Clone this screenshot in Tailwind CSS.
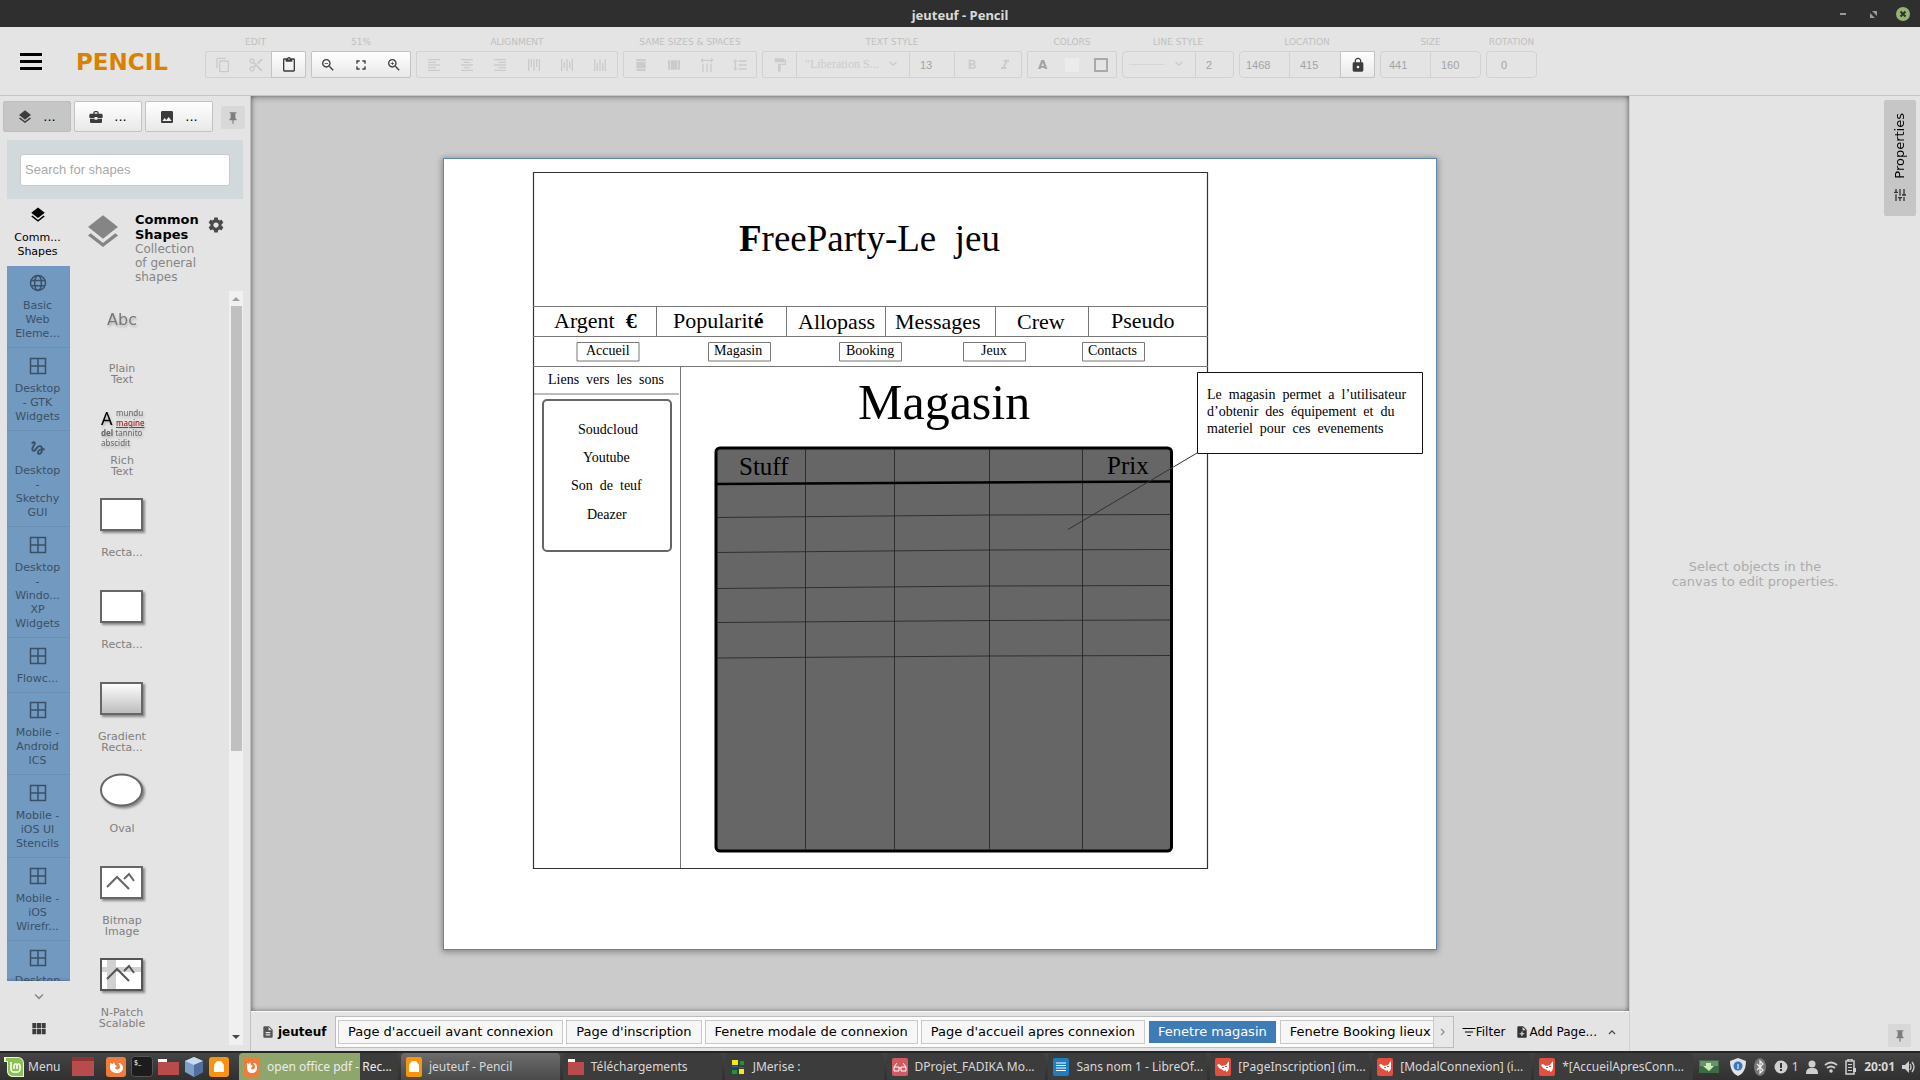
<!DOCTYPE html>
<html lang="fr">
<head>
<meta charset="utf-8">
<title>jeuteuf - Pencil</title>
<script src="https://cdn.jsdelivr.net/npm/@tailwindcss/browser@4"></script>
</head>
<body class="h-screen flex flex-col overflow-hidden bg-[#e4e4e4] font-['DejaVu_Sans',sans-serif] text-black">

<svg class="hidden" aria-hidden="true">
  <symbol id="layers" viewBox="0 0 24 24"><path d="M11.99 18.54l-7.37-5.73L3 14.07l9 7 9-7-1.63-1.27-7.38 5.74zM12 16l7.36-5.73L21 9l-9-7-9 7 1.63 1.27L12 16z"/></symbol>
  <symbol id="copy" viewBox="0 0 24 24"><path d="M16 1H4c-1.1 0-2 .9-2 2v14h2V3h12V1zm3 4H8c-1.1 0-2 .9-2 2v14c0 1.1.9 2 2 2h11c1.1 0 2-.9 2-2V7c0-1.1-.9-2-2-2zm0 16H8V7h11v14z"/></symbol>
  <symbol id="cut" viewBox="0 0 24 24"><path d="M9.64 7.64c.23-.5.36-1.05.36-1.64 0-2.21-1.79-4-4-4S2 3.79 2 6s1.79 4 4 4c.59 0 1.14-.13 1.64-.36L10 12l-2.36 2.36C7.14 14.13 6.59 14 6 14c-2.21 0-4 1.79-4 4s1.79 4 4 4 4-1.79 4-4c0-.59-.13-1.14-.36-1.64L12 14l7 7h3v-1L9.64 7.64zM6 8c-1.1 0-2-.89-2-2s.9-2 2-2 2 .89 2 2-.9 2-2 2zm0 12c-1.1 0-2-.89-2-2s.9-2 2-2 2 .89 2 2-.9 2-2 2zm6-7.5c-.28 0-.5-.22-.5-.5s.22-.5.5-.5.5.22.5.5-.22.5-.5.5zM19 3l-6 6 2 2 7-7V3z"/></symbol>
  <symbol id="paste" viewBox="0 0 24 24"><path d="M19 2h-4.18C14.4.84 13.3 0 12 0c-1.3 0-2.4.84-2.82 2H5c-1.1 0-2 .9-2 2v16c0 1.1.9 2 2 2h14c1.1 0 2-.9 2-2V4c0-1.1-.9-2-2-2zm-7 0c.55 0 1 .45 1 1s-.45 1-1 1-1-.45-1-1 .45-1 1-1zm7 18H5V4h2v3h10V4h2v16z"/></symbol>
  <symbol id="zout" viewBox="0 0 24 24"><path d="M15.5 14h-.79l-.28-.27C15.41 12.59 16 11.11 16 9.5 16 5.91 13.09 3 9.5 3S3 5.91 3 9.5 5.91 16 9.5 16c1.61 0 3.09-.59 4.23-1.57l.27.28v.79l5 4.99L20.49 19l-4.99-5zm-6 0C7.01 14 5 11.99 5 9.5S7.01 5 9.5 5 14 7.01 14 9.5 11.99 14 9.5 14zM7 9h5v1H7z"/></symbol>
  <symbol id="zin" viewBox="0 0 24 24"><path d="M15.5 14h-.79l-.28-.27C15.41 12.59 16 11.11 16 9.5 16 5.91 13.09 3 9.5 3S3 5.91 3 9.5 5.91 16 9.5 16c1.61 0 3.09-.59 4.23-1.57l.27.28v.79l5 4.99L20.49 19l-4.99-5zm-6 0C7.01 14 5 11.99 5 9.5S7.01 5 9.5 5 14 7.01 14 9.5 11.99 14 9.5 14zm2.5-4h-2v2H9v-2H7V9h2V7h1v2h2v1z"/></symbol>
  <symbol id="full" viewBox="0 0 24 24"><path d="M7 14H5v5h5v-2H7v-3zm-2-4h2V7h3V5H5v5zm12 7h-3v2h5v-5h-2v3zM14 5v2h3v3h2V5h-5z"/></symbol>
  <symbol id="al" viewBox="0 0 24 24"><path d="M15 15H3v2h12v-2zm0-8H3v2h12V7zM3 13h18v-2H3v2zm0 8h18v-2H3v2zM3 3v2h18V3H3z"/></symbol>
  <symbol id="ac" viewBox="0 0 24 24"><path d="M7 15v2h10v-2H7zm-4 6h18v-2H3v2zm0-8h18v-2H3v2zm4-6v2h10V7H7zM3 3v2h18V3H3z"/></symbol>
  <symbol id="ar" viewBox="0 0 24 24"><path d="M3 21h18v-2H3v2zm6-4h12v-2H9v2zm-6-4h18v-2H3v2zm6-4h12V7H9v2zM3 3v2h18V3H3z"/></symbol>
  <symbol id="sw" viewBox="0 0 24 24"><path d="M5 3h14v3H5zM7 7h12v10H5V7zM5 18h14v3H5z"/></symbol>
  <symbol id="sh" viewBox="0 0 24 24"><path d="M3 5h3v14H3zM7 5h10v14H7zM18 5h3v14h-3z"/></symbol>
  <symbol id="sv" viewBox="0 0 24 24"><path d="M5 10h2v12H5zM11 10h2v12h-2zM17 10h2v12h-2zM6 4h12V1l4 4-4 4V6H6v3L2 5l4-4z"/></symbol>
  <symbol id="ls" viewBox="0 0 24 24"><path d="M6 7h2.5L5 3.5 1.5 7H4v10H1.5L5 20.5 8.5 17H6V7zm4-2v2h12V5H10zm0 14h12v-2H10v2zm0-6h12v-2H10v2z"/></symbol>
  <symbol id="paint" viewBox="0 0 24 24"><path d="M18 4V3c0-.55-.45-1-1-1H5c-.55 0-1 .45-1 1v4c0 .55.45 1 1 1h12c.55 0 1-.45 1-1V6h1v4H9v11c0 .55.45 1 1 1h2c.55 0 1-.45 1-1v-9h8V4h-3z"/></symbol>
  <symbol id="bold" viewBox="0 0 24 24"><path d="M15.6 10.79c.97-.67 1.65-1.77 1.65-2.79 0-2.26-1.75-4-4-4H7v14h7.04c2.09 0 3.71-1.7 3.71-3.79 0-1.52-.86-2.82-2.15-3.42zM10 6.5h3c.83 0 1.5.67 1.5 1.5s-.67 1.5-1.5 1.5h-3v-3zm3.5 9H10v-3h3.5c.83 0 1.5.67 1.5 1.5s-.67 1.5-1.5 1.5z"/></symbol>
  <symbol id="ital" viewBox="0 0 24 24"><path d="M10 4v3h2.21l-3.42 8H6v3h8v-3h-2.21l3.42-8H18V4z"/></symbol>
  <symbol id="lock" viewBox="0 0 24 24"><path d="M18 8h-1V6c0-2.76-2.24-5-5-5S7 3.24 7 6v2H6c-1.1 0-2 .9-2 2v10c0 1.1.9 2 2 2h12c1.1 0 2-.9 2-2V10c0-1.1-.9-2-2-2zm-6 9c-1.1 0-2-.9-2-2s.9-2 2-2 2 .9 2 2-.9 2-2 2zm3.1-9H8.9V6c0-1.71 1.39-3.1 3.1-3.1 1.71 0 3.1 1.39 3.1 3.1v2z"/></symbol>
  <symbol id="down" viewBox="0 0 24 24"><path d="M7.41 7.84L12 12.42l4.59-4.58L18 9.25l-6 6-6-6z"/></symbol>
  <symbol id="case" viewBox="0 0 24 24"><path d="M10 16v-1H3.01L3 19c0 1.11.89 2 2 2h14c1.11 0 2-.89 2-2v-4h-7v1h-4zm10-9h-4.01V5l-2-2h-4l-2 2v2H4c-1.1 0-2 .9-2 2v3c0 1.11.89 2 2 2h6v-2h4v2h6c1.1 0 2-.9 2-2V9c0-1.1-.9-2-2-2zm-6 0h-4V5h4v2z"/></symbol>
  <symbol id="image" viewBox="0 0 24 24"><path d="M21 19V5c0-1.1-.9-2-2-2H5c-1.1 0-2 .9-2 2v14c0 1.1.9 2 2 2h14c1.1 0 2-.9 2-2zM8.5 13.5l2.5 3.01L14.5 12l4.5 6H5l3.5-4.5z"/></symbol>
  <symbol id="pin" viewBox="0 0 24 24"><path d="M6 2h12v2h-2v8l2 2v2h-5v6h-2v-6H6v-2l2-2V4H6z"/></symbol>
  <symbol id="gear" viewBox="0 0 24 24"><path d="M19.43 12.98c.04-.32.07-.64.07-.98s-.03-.66-.07-.98l2.11-1.65c.19-.15.24-.42.12-.64l-2-3.46c-.12-.22-.39-.3-.61-.22l-2.49 1c-.52-.4-1.08-.73-1.69-.98l-.38-2.65C14.46 2.18 14.25 2 14 2h-4c-.25 0-.46.18-.49.42l-.38 2.65c-.61.25-1.17.59-1.69.98l-2.49-1c-.23-.09-.49 0-.61.22l-2 3.46c-.13.22-.07.49.12.64l2.11 1.65c-.04.32-.07.65-.07.98s.03.66.07.98l-2.11 1.65c-.19.15-.24.42-.12.64l2 3.46c.12.22.39.3.61.22l2.49-1c.52.4 1.08.73 1.69.98l.38 2.65c.03.24.24.42.49.42h4c.25 0 .46-.18.49-.42l.38-2.65c.61-.25 1.17-.59 1.69-.98l2.49 1c.23.09.49 0 .61-.22l2-3.46c.12-.22.07-.49-.12-.64l-2.11-1.65zM12 15.5c-1.93 0-3.5-1.57-3.5-3.5s1.57-3.5 3.5-3.5 3.5 1.57 3.5 3.5-1.57 3.5-3.5 3.5z"/></symbol>
  <symbol id="globe" viewBox="0 0 24 24"><g fill="none" stroke="currentColor" stroke-width="2"><circle cx="12" cy="12" r="10"/><ellipse cx="12" cy="12" rx="4.5" ry="10"/><path d="M3 8.5h18M3 15.5h18"/></g></symbol>
  <symbol id="grid4" viewBox="0 0 24 24"><path fill="none" stroke="currentColor" stroke-width="2" d="M2 2h20v20H2zM12 2v20M2 12h20"/></symbol>
  <symbol id="gest" viewBox="0 0 24 24"><path d="M4.59 6.89c.7-.71 1.4-1.35 1.71-1.22.5.2 0 1.03-.3 1.52-.25.42-2.86 3.89-2.86 6.31 0 1.28.48 2.34 1.34 2.98.75.56 1.74.73 2.64.46 1.07-.31 1.95-1.4 3.06-2.77 1.21-1.49 2.83-3.44 4.08-3.44 1.63 0 1.65 1.01 1.76 1.79-3.78.64-5.38 3.67-5.38 5.37 0 1.7 1.44 3.09 3.21 3.09 1.63 0 4.29-1.33 4.69-6.1H21v-2.5h-2.47c-.15-1.65-1.09-4.2-4.03-4.2-2.25 0-4.18 1.91-4.94 2.84-.58.73-2.06 2.48-2.29 2.72-.25.3-.68.84-1.11.84-.45 0-.72-.83-.36-1.92.35-1.09 1.4-2.86 1.85-3.52.78-1.14 1.3-1.92 1.3-3.28C8.95 3.69 7.31 3 6.44 3 5.12 3 3.97 4 3.72 4.25c-.36.36-.66.66-.88.93l1.75 1.71zm9.29 11.66c-.31 0-.74-.26-.74-.72 0-.6.73-2.2 2.87-2.76-.3 2.69-1.43 3.48-2.13 3.48z"/></symbol>
  <symbol id="mod" viewBox="0 0 24 24"><path d="M2 3h6v8H2zM9 3h6v8H9zM16 3h6v8h-6zM2 12h6v8H2zM9 12h6v8H9zM16 12h6v8h-6z"/></symbol>
  <symbol id="tune" viewBox="0 0 24 24"><path d="M3 17v2h6v-2H3zM3 5v2h10V5H3zm10 16v-2h8v-2h-8v-2h-2v6h2zM7 9v2H3v2h4v2h2V9H7zm14 4v-2H11v2h10zm-6-4h2V7h4V5h-4V3h-2v6z"/></symbol>
  <symbol id="doc" viewBox="0 0 24 24"><path d="M14 2H6c-1.1 0-2 .9-2 2v16c0 1.1.9 2 2 2h12c1.1 0 2-.9 2-2V8l-6-6zm2 16H8v-2h8v2zm0-4H8v-2h8v2zm-3-5V3.5L18.5 9H13z"/></symbol>
  <symbol id="addp" viewBox="0 0 24 24"><path d="M14 2H6c-1.1 0-2 .9-2 2v16c0 1.1.9 2 2 2h12c1.1 0 2-.9 2-2V8l-6-6zm2 14h-3v3h-2v-3H8v-2h3v-3h2v3h3v2zm-3-7V3.5L18.5 9H13z"/></symbol>
  <symbol id="filt" viewBox="0 0 24 24"><path d="M9 19h6v-2H9zM1 5v2h22V5zm4 8h14v-2H5z"/></symbol>
  <symbol id="ffx" viewBox="0 0 16 20"><rect width="16" height="20" rx="2" fill="#ee7c3a"/><path d="M3 6l2 1 1-2 1 3 2 1-2 2c0 2 4 2 4-1 0-2-1-3-2-4 3 0 4 2 4 5s-2 5-5 5-5-2-5-5z" fill="#fff"/></symbol>
  <symbol id="home" viewBox="0 0 16 20"><rect width="16" height="20" rx="2" fill="#f9940f"/><path d="M3 15V8l3-4h4l3 4v7z" fill="#fff"/></symbol>
  <symbol id="fold" viewBox="0 0 16 18"><path d="M0 1h7v3H0z" fill="#fff"/><path d="M0 4h16v12a1 1 0 0 1-1 1H1a1 1 0 0 1-1-1z" fill="#b84b4b"/></symbol>
  <symbol id="gimp" viewBox="0 0 16 20"><rect y="1" width="16" height="18" rx="2" fill="#e2503d"/><path d="M2 8l2-1 3 2 4-1 3-4v7l-1 3-2 1v-2l-2 1-1-1-4-2z" fill="#fff"/><path d="M7 10h2v1H7zM10 9h2v1h-2z" fill="#e2503d"/></symbol>
</svg>

<!-- title bar -->
<header class="h-[27px] shrink-0 bg-[#2f2f2f] grid grid-cols-[1fr_auto_1fr] items-center text-[#dadada] font-['Noto_Sans',sans-serif]">
  <span></span>
  <h1 class="text-[13px] font-bold leading-[18px] pt-0.5">jeuteuf - Pencil</h1>
  <div class="flex justify-end items-center gap-4 pr-2.5">
    <button aria-label="Réduire" class="w-3.5 h-3.5"><svg viewBox="0 0 14 14"><path d="M4 6h6v2H4z" fill="#9a9a9a"/></svg></button>
    <button aria-label="Restaurer" class="w-3.5 h-3.5"><svg viewBox="0 0 14 14"><path d="M6 4h5v5zM4 6v5h5z" fill="#9a9a9a"/></svg></button>
    <button aria-label="Fermer" class="w-3.5 h-3.5"><svg viewBox="0 0 14 14"><circle cx="7" cy="7" r="7" fill="#92b372"/><path d="M4.5 4.5l5 5m0-5l-5 5" stroke="#2f2f2f" stroke-width="2"/></svg></button>
  </div>
</header>

<!-- toolbar -->
<div class="h-[69px] shrink-0 border-b border-[#c6c6c6] flex items-start pl-5 fill-[#cbcbcb] text-[#c0c0c0]">
  <button aria-label="Menu" class="mt-[25px] flex flex-col gap-1 w-[22px] py-px"><span class="h-[3px] bg-black"></span><span class="h-[3px] bg-black"></span><span class="h-[3px] bg-black"></span></button>
  <div class="ml-[34px] mt-[21px] w-[129px] text-[23px] leading-[28px] font-bold text-[#d98200]">PENCIL</div>
  <div class="flex gap-[5px] pt-[9px] text-[9px] leading-[12px]">
    <div class="flex flex-col items-center gap-[3px]"><span>EDIT</span>
      <div class="flex h-[27px] w-[101px] border border-[#d2d2d2] rounded-[2px]">
        <button disabled aria-label="Copier" class="flex-1 grid place-items-center"><svg class="size-4"><use href="#copy"/></svg></button>
        <button disabled aria-label="Couper" class="flex-1 grid place-items-center"><svg class="size-4"><use href="#cut"/></svg></button>
        <button aria-label="Coller" class="flex-1 grid place-items-center -m-px border border-[#c3c3c3] rounded-r-[2px] bg-linear-to-b from-white to-[#e8e8e8] fill-[#3c3c3c]"><svg class="size-4"><use href="#paste"/></svg></button>
      </div></div>
    <div class="flex flex-col items-center gap-[3px]"><span>51%</span>
      <div class="flex h-[27px] w-[100px] border border-[#c3c3c3] rounded-[2px] bg-linear-to-b from-white to-[#e8e8e8] fill-[#3c3c3c]">
        <button aria-label="Zoom arrière" class="flex-1 grid place-items-center"><svg class="size-4"><use href="#zout"/></svg></button>
        <button aria-label="Ajuster" class="flex-1 grid place-items-center"><svg class="size-4"><use href="#full"/></svg></button>
        <button aria-label="Zoom avant" class="flex-1 grid place-items-center"><svg class="size-4"><use href="#zin"/></svg></button>
      </div></div>
    <div class="flex flex-col items-center gap-[3px]"><span>ALIGNMENT</span>
      <div class="flex h-[27px] w-[202px] border border-[#d2d2d2] rounded-[2px]">
        <button disabled aria-label="Gauche" class="flex-1 grid place-items-center"><svg class="size-4"><use href="#al"/></svg></button>
        <button disabled aria-label="Centre" class="flex-1 grid place-items-center"><svg class="size-4"><use href="#ac"/></svg></button>
        <button disabled aria-label="Droite" class="flex-1 grid place-items-center"><svg class="size-4"><use href="#ar"/></svg></button>
        <button disabled aria-label="Haut" class="flex-1 grid place-items-center"><svg class="size-4 rotate-90"><use href="#al"/></svg></button>
        <button disabled aria-label="Milieu" class="flex-1 grid place-items-center"><svg class="size-4 rotate-90"><use href="#ac"/></svg></button>
        <button disabled aria-label="Bas" class="flex-1 grid place-items-center"><svg class="size-4 rotate-90"><use href="#ar"/></svg></button>
      </div></div>
    <div class="flex flex-col items-center gap-[3px]"><span>SAME SIZES &amp; SPACES</span>
      <div class="flex h-[27px] w-[134px] border border-[#d2d2d2] rounded-[2px]">
        <button disabled aria-label="Même largeur" class="flex-1 grid place-items-center"><svg class="size-4"><use href="#sw"/></svg></button>
        <button disabled aria-label="Même hauteur" class="flex-1 grid place-items-center"><svg class="size-4"><use href="#sh"/></svg></button>
        <button disabled aria-label="Espacement horizontal" class="flex-1 grid place-items-center"><svg class="size-4"><use href="#sv"/></svg></button>
        <button disabled aria-label="Espacement vertical" class="flex-1 grid place-items-center"><svg class="size-4"><use href="#ls"/></svg></button>
      </div></div>
    <div class="flex flex-col items-center gap-[3px]"><span>TEXT STYLE</span>
      <div class="flex h-[27px] w-[260px] border border-[#d2d2d2] rounded-[2px]">
        <button disabled aria-label="Copier le style" class="w-[34px] grid place-items-center border-r border-[#d2d2d2]"><svg class="size-4"><use href="#paint"/></svg></button>
        <div class="relative w-[113px] border-r border-[#d2d2d2]">
          <select disabled aria-label="Police" class="appearance-none w-full h-full pl-2 pb-px text-[12px] font-['Liberation_Serif',serif] opacity-100 text-[#cbcbcb]"><option>"Liberation S...</option></select>
          <svg class="absolute right-2 top-1 size-4 pointer-events-none"><use href="#down"/></svg>
        </div>
        <input disabled aria-label="Taille" value="13" class="w-[45px] border-r border-[#d2d2d2] pl-2.5 text-[11px] text-[#a3a3a3] font-['Liberation_Sans',sans-serif]">
        <button disabled aria-label="Gras" class="flex-1 grid place-items-center"><svg class="size-4"><use href="#bold"/></svg></button>
        <button disabled aria-label="Italique" class="flex-1 grid place-items-center"><svg class="size-4"><use href="#ital"/></svg></button>
      </div></div>
    <div class="flex flex-col items-center gap-[3px]"><span>COLORS</span>
      <div class="flex h-[27px] w-[90px] border border-[#d2d2d2] rounded-[2px]">
        <button disabled aria-label="Couleur du texte" class="flex-1 text-[12px] font-bold text-[#a3a3a3]">A</button>
        <button disabled aria-label="Remplissage" class="flex-1 grid place-items-center"><span class="size-3.5 bg-[#ebebeb]"></span></button>
        <button disabled aria-label="Contour" class="flex-1 grid place-items-center"><span class="size-3.5 border-2 border-[#a9a9a9]"></span></button>
      </div></div>
    <div class="flex flex-col items-center gap-[3px]"><span>LINE STYLE</span>
      <div class="flex h-[27px] w-[112px] border border-[#d2d2d2] rounded">
        <div class="relative w-[73px] border-r border-[#d2d2d2]">
          <select disabled aria-label="Trait" class="appearance-none w-full h-full"><option></option></select>
          <span class="absolute left-1.5 top-3 w-9 h-px bg-[#d6d6d6]"></span>
          <svg class="absolute right-2 top-1 size-4 pointer-events-none"><use href="#down"/></svg>
        </div>
        <input disabled aria-label="Épaisseur" value="2" class="w-[37px] pl-2.5 text-[11px] text-[#a3a3a3] font-['Liberation_Sans',sans-serif]">
      </div></div>
    <div class="flex flex-col items-center gap-[3px]"><span>LOCATION</span>
      <div class="flex h-[27px] w-[136px] border border-[#d2d2d2] rounded-l">
        <input disabled aria-label="X" value="1468" class="w-[50px] border-r border-[#d2d2d2] pl-1.5 text-[11px] text-[#a3a3a3] font-['Liberation_Sans',sans-serif]">
        <input disabled aria-label="Y" value="415" class="w-[51px] pl-2.5 text-[11px] text-[#a3a3a3] font-['Liberation_Sans',sans-serif]">
        <button aria-label="Verrouiller" class="flex-1 grid place-items-center -m-px border border-[#c3c3c3] rounded-r-[2px] bg-linear-to-b from-white to-[#e8e8e8] fill-[#3c3c3c]"><svg class="size-4"><use href="#lock"/></svg></button>
      </div></div>
    <div class="flex flex-col items-center gap-[3px]"><span>SIZE</span>
      <div class="flex h-[27px] w-[101px] border border-[#d2d2d2] rounded">
        <input disabled aria-label="Largeur" value="441" class="w-[50px] border-r border-[#d2d2d2] pl-2 text-[11px] text-[#a3a3a3] font-['Liberation_Sans',sans-serif]">
        <input disabled aria-label="Hauteur" value="160" class="w-[49px] pl-2.5 text-[11px] text-[#a3a3a3] font-['Liberation_Sans',sans-serif]">
      </div></div>
    <div class="flex flex-col items-center gap-[3px]"><span>ROTATION</span>
      <div class="flex h-[27px] w-[51px] border border-[#d2d2d2] rounded">
        <input disabled aria-label="Rotation" value="0" class="w-full pl-3.5 text-[11px] text-[#a3a3a3] font-['Liberation_Sans',sans-serif]">
      </div></div>
  </div>
</div>

<div class="flex-1 min-h-0 flex">
  <!-- left panel -->
  <aside class="w-[251px] shrink-0 border-r border-[#c0c0c0] flex flex-col pb-1.5">
    <div class="flex gap-[3px] pl-[3px] pt-[5px] h-11 items-start fill-[#3c3c3c] text-[13px]">
      <button class="w-[68px] h-[31px] rounded-[2px] border border-[#bdbdbd] bg-[#c6c6c6] flex items-center justify-center gap-2.5 pr-px"><svg class="size-4"><use href="#layers"/></svg>...</button>
      <button class="w-[68px] h-[31px] rounded-[2px] border border-[#c3c3c3] bg-linear-to-b from-white to-[#e8e8e8] flex items-center justify-center gap-2.5 pr-px"><svg class="size-4"><use href="#case"/></svg>...</button>
      <button class="w-[68px] h-[31px] rounded-[2px] border border-[#c3c3c3] bg-linear-to-b from-white to-[#e8e8e8] flex items-center justify-center gap-2.5 pr-px"><svg class="size-4"><use href="#image"/></svg>...</button>
      <button aria-label="Épingler" class="ml-[5px] mt-[5px] w-6 h-[23px] rounded-[2px] bg-[#d8d8d8] grid place-items-center fill-[#7d7d7d]"><svg class="size-3.5"><use href="#pin"/></svg></button>
    </div>
    <div class="mx-[7px] h-[59px] shrink-0 bg-[#d2d9dc] px-[13px] flex items-center">
      <input type="text" aria-label="Search for shapes" placeholder="Search for shapes" class="w-full h-8 rounded-[3px] border border-[#cacaca] bg-white px-1 text-[13px] placeholder:text-[#a9a9a9] font-['Liberation_Sans',sans-serif]">
    </div>
    <div class="flex-1 min-h-0 flex mx-[7px]">
      <div class="w-[63px] flex flex-col">
        <nav class="flex-1 min-h-0 overflow-hidden bg-[#7299bf] text-[11px] leading-[14px] text-[#3a5068] fill-[#3a5068] shadow-[inset_0_-3px_3px_-2px_#55789a]">
          <button class="w-full bg-[#e4e4e4] text-black fill-black flex flex-col items-center gap-[7px] pt-[7px] pr-0.5 h-[67px]"><svg class="size-[18px]"><use href="#layers"/></svg><span>Comm...<br>Shapes</span></button>
          <button class="w-full flex flex-col items-center gap-[7px] pt-2 pb-1.5 pr-0.5 border-b border-[#6a8fb4]"><svg class="size-[18px]"><use href="#globe"/></svg><span>Basic<br>Web<br>Eleme...</span></button>
          <button class="w-full flex flex-col items-center gap-[7px] pt-[9px] pb-1.5 pr-0.5 border-b border-[#6a8fb4]"><svg class="size-[18px]"><use href="#grid4"/></svg><span>Desktop<br>- GTK<br>Widgets</span></button>
          <button class="w-full flex flex-col items-center gap-[7px] pt-2 pb-1.5 pr-0.5 border-b border-[#6a8fb4]"><svg class="size-[18px]"><use href="#gest"/></svg><span>Desktop<br>-<br>Sketchy<br>GUI</span></button>
          <button class="w-full flex flex-col items-center gap-[7px] pt-[9px] pb-1.5 pr-0.5 border-b border-[#6a8fb4]"><svg class="size-[18px]"><use href="#grid4"/></svg><span>Desktop<br>-<br>Windo...<br>XP<br>Widgets</span></button>
          <button class="w-full flex flex-col items-center gap-[7px] pt-[9px] pb-1.5 pr-0.5 border-b border-[#6a8fb4]"><svg class="size-[18px]"><use href="#grid4"/></svg><span>Flowc...</span></button>
          <button class="w-full flex flex-col items-center gap-[7px] pt-2 pb-1.5 pr-0.5 border-b border-[#6a8fb4]"><svg class="size-[18px]"><use href="#grid4"/></svg><span>Mobile -<br>Android<br>ICS</span></button>
          <button class="w-full flex flex-col items-center gap-[7px] pt-[9px] pb-1.5 pr-0.5 border-b border-[#6a8fb4]"><svg class="size-[18px]"><use href="#grid4"/></svg><span>Mobile -<br>iOS UI<br>Stencils</span></button>
          <button class="w-full flex flex-col items-center gap-[7px] pt-[9px] pb-1.5 pr-0.5 border-b border-[#6a8fb4]"><svg class="size-[18px]"><use href="#grid4"/></svg><span>Mobile -<br>iOS<br>Wirefr...</span></button>
          <button class="w-full flex flex-col items-center gap-[7px] pt-2 pb-1.5 pr-0.5"><svg class="size-[18px]"><use href="#grid4"/></svg><span>Desktop</span></button>
        </nav>
        <button aria-label="Défiler" class="h-8 grid place-items-center fill-[#8a8a8a]"><svg class="size-[18px]"><use href="#down"/></svg></button>
        <button aria-label="Grille" class="h-8 grid place-items-center fill-[#3c3c3c]"><svg class="size-4"><use href="#mod"/></svg></button>
      </div>
      <div class="flex-1 min-w-0 flex flex-col">
        <div class="h-[92px] shrink-0 flex pt-[13px] pl-[13px]">
          <svg class="size-10 shrink-0 fill-[#858585]"><use href="#layers"/></svg>
          <div class="ml-3 w-[66px] text-[12px] leading-[14px] text-[#858585]"><h2 class="text-[13px] leading-[15px] font-bold text-black">Common Shapes</h2>Collection of general shapes</div>
          <button aria-label="Options" class="mt-1 ml-1.5 size-[18px] fill-[#4a4a4a]"><svg class="size-[18px]"><use href="#gear"/></svg></button>
        </div>
        <div class="flex-1 min-h-0 flex">
          <ul class="w-[104px] overflow-hidden pt-[11px] text-center text-[11px] leading-[11px] text-[#808080]">
            <li class="h-[92px] flex flex-col items-center"><svg class="w-16 h-14 shrink-0 mb-[5px] drop-shadow-[1px_2px_1px_#0003]" viewBox="0 0 64 56"><text x="32" y="23" text-anchor="middle" font-size="16" fill="#777">Abc</text></svg>Plain<br>Text</li>
            <li class="h-[92px] flex flex-col items-center"><svg class="w-16 h-14 shrink-0 mb-[5px] drop-shadow-[1px_2px_1px_#0003] font-['Noto_Sans',sans-serif]" viewBox="1 0 64 56" font-size="8" fill="#666"><text x="12" y="31" font-size="18" fill="#000">A</text><text x="27" y="22">mundu</text><text x="27" y="32" fill="#900" text-decoration="underline">magine</text><text x="12" y="42"><tspan font-weight="bold">del</tspan> tannito</text><text x="12" y="52">abscidit</text></svg>Rich<br>Text</li>
            <li class="h-[92px] flex flex-col items-center"><svg class="w-16 h-14 shrink-0 mb-[5px] drop-shadow-[2px_2px_1px_#0006]" viewBox="1 0 64 56"><path d="M12 13h41v31H12z" fill="#fff" stroke="#666" stroke-width="2"/></svg>Recta...</li>
            <li class="h-[92px] flex flex-col items-center"><svg class="w-16 h-14 shrink-0 mb-[5px] drop-shadow-[2px_2px_1px_#0006]" viewBox="1 0 64 56"><path d="M12 13h41v31H12z" fill="#fff" stroke="#666" stroke-width="2"/></svg>Recta...</li>
            <li class="h-[92px] flex flex-col items-center"><svg class="w-16 h-14 shrink-0 mb-[5px] drop-shadow-[2px_2px_1px_#0006]" viewBox="1 0 64 56"><defs><linearGradient id="gr" x2="0" y2="1"><stop stop-color="#fff"/><stop offset="1" stop-color="#bbb"/></linearGradient></defs><path d="M12 13h41v31H12z" fill="url(#gr)" stroke="#666" stroke-width="2"/></svg>Gradient<br>Recta...</li>
            <li class="h-[92px] flex flex-col items-center"><svg class="w-16 h-14 shrink-0 mb-[5px] drop-shadow-[2px_2px_1px_#0006]" viewBox="1 0 64 56"><ellipse cx="32.5" cy="28" rx="20.5" ry="15.5" fill="#fff" stroke="#666" stroke-width="2"/></svg>Oval</li>
            <li class="h-[92px] flex flex-col items-center"><svg class="w-16 h-14 shrink-0 mb-[5px] drop-shadow-[2px_2px_1px_#0006]" viewBox="1 0 64 56"><path d="M12 13h41v31H12z" fill="#fff" stroke="#666" stroke-width="2"/><path d="M18 33l10-10 12 12M35 25l5-5 5 7" fill="none" stroke="#666" stroke-width="2"/></svg>Bitmap<br>Image</li>
            <li class="h-[92px] flex flex-col items-center"><svg class="w-16 h-14 shrink-0 mb-[5px] drop-shadow-[2px_2px_1px_#0006]" viewBox="1 0 64 56"><path d="M12 13h41v31H12z" fill="#fff"/><path d="M18 13h9v31h-9zM12 21h41v5H12z" fill="#000" opacity=".18"/><path d="M12 13h41v31H12zM18 33l10-10 12 12M35 25l5-5 5 7" fill="none" stroke="#555" stroke-width="2"/></svg>N-Patch<br>Scalable</li>
          </ul>
          <div class="ml-auto w-3.5 bg-[#f0f0f0] flex flex-col items-center">
            <svg class="w-3.5 h-[15px] shrink-0" viewBox="0 0 14 15"><path d="M3 10l4-4 4 4z" fill="#a0a0a0"/></svg>
            <div class="w-[11px] h-[59%] bg-[#c0c0c0]"></div>
            <svg class="w-3.5 h-[15px] shrink-0 mt-auto" viewBox="0 0 14 15"><path d="M3 5l4 4 4-4z" fill="#444"/></svg>
          </div>
        </div>
      </div>
    </div>
  </aside>

  <!-- drawing area -->
  <main class="flex-1 min-w-0 flex flex-col">
    <div class="flex-1 min-h-0 bg-[#cbcbcb] shadow-[inset_0_4px_6px_-3px_#0006,inset_4px_0_5px_-3px_#0005,inset_-4px_0_5px_-3px_#0005,inset_0_-4px_5px_-3px_#0004] grid place-items-center">
      <svg class="w-[992px] h-[790px] bg-white outline outline-[#5a87b3] shadow-[0_1px_6px_2px_#0005] font-['Liberation_Serif',serif]" viewBox="444 159 992 790" fill="#000">
        <g fill="none" stroke="#333" stroke-width="1">
          <path d="M533.5 172.5h674v696h-674z" stroke-width="1.2"/>
          <g stroke="#777"><path d="M533 306.5h675M533 336.5h675M533 366.5h675M656.5 306v31M786.5 306v31M885.5 306v31M995.5 306v31M1088.5 306v31M680.5 366v502M534 394h145"/>
          <path d="M577 342.500h62v18.500h-62zM708.500 342.500h62v18.500h-62zM839.500 342.500h62v18.500h-62zM963.500 342.500h62v18.500h-62zM1082.500 342.500h62v18.500h-62z"/></g>
          <rect x="543" y="400" width="128" height="151" rx="4" stroke="#666" stroke-width="2"/>
        </g>
        <rect x="716" y="448" width="455.5" height="403" rx="4" fill="#666" stroke="#000" stroke-width="3"/>
        <g fill="none" stroke="#222" stroke-opacity=".8">
          <path d="M805.5 449v400M894.5 449v400M989.5 449v400M1082.5 449v400"/>
          <path d="M717 517.5L990 515l180-.5M717 552.5L990 550l180-.5M717 588.500L990 586l180-.5M717 622.5L990 620.5l180-.5M717 658L990 656l180-.5"/>
        </g>
        <path d="M716 484L1171 481.5" stroke="#000" stroke-width="2.5"/>
        <path d="M1068 529.5L1197 453" stroke="#333"/>
        <path d="M1197.5 372.5h225v81h-225z" fill="#fff" stroke="#111"/>
        <g font-size="37"><text x="739" y="251"><tspan font-weight="bold">F</tspan>reeParty-Le&#160; jeu</text></g>
        <g font-size="22"><text x="554" y="328">Argent&#160; <tspan font-weight="bold">€</tspan></text><text x="673" y="328">Popularit<tspan font-weight="bold">é</tspan></text><text x="798" y="329">Allopass</text><text x="895" y="329">Messages</text><text x="1017" y="329">Crew</text><text x="1111" y="328">Pseudo</text></g>
        <g font-size="14">
          <text x="586" y="355">Accueil</text><text x="714" y="355">Magasin</text><text x="846" y="355">Booking</text><text x="981" y="355">Jeux</text><text x="1088" y="355">Contacts</text>
          <text x="548" y="384">Liens&#160; vers&#160; les&#160; sons</text>
          <text x="578" y="434">Soudcloud</text><text x="583" y="462">Youtube</text><text x="571" y="490">Son&#160; de&#160; teuf</text><text x="587" y="519">Deazer</text>
          <text x="1207" y="399">Le&#160; magasin&#160; permet&#160; a&#160; l’utilisateur</text><text x="1207" y="416">d’obtenir&#160; des&#160; équipement&#160; et&#160; du</text><text x="1207" y="433">materiel&#160; pour&#160; ces&#160; evenements</text>
        </g>
        <text x="858" y="419" font-size="50">Magasin</text>
        <g font-size="25"><text x="739" y="475">Stuff</text><text x="1107" y="474">Prix</text></g>
      </svg>
    </div>
    <!-- page tabs -->
    <div class="h-10 shrink-0 border-t border-[#fafafa] flex items-center pl-2.5 text-[12px]">
      <svg class="size-3.5 fill-[#555]"><use href="#doc"/></svg>
      <strong class="ml-[3px] w-[57px]">jeuteuf</strong>
      <div class="flex-1 min-w-0 h-8 border border-[#bdbdbd] flex bg-[#fdfdfd]">
        <div class="flex-1 min-w-0 overflow-hidden flex items-center gap-[3px] pl-0.5 text-[13px]">
          <button class="shrink-0 h-6 px-[9px] border border-[#c9c9c9] bg-[#f7f7f7]">Page d'accueil avant connexion</button>
          <button class="shrink-0 h-6 px-[9px] border border-[#c9c9c9] bg-[#f7f7f7]">Page d'inscription</button>
          <button class="shrink-0 h-6 px-[9px] border border-[#c9c9c9] bg-[#f7f7f7]">Fenetre modale de connexion</button>
          <button class="shrink-0 h-6 px-[9px] border border-[#c9c9c9] bg-[#f7f7f7]">Page d'accueil apres connexion</button>
          <button class="shrink-0 h-6 px-[9px] border border-[#f7f7f7] bg-[#3f7cb6] text-white">Fenetre magasin</button>
          <button class="shrink-0 h-6 px-[9px] border border-[#c9c9c9] bg-[#f7f7f7]">Fenetre Booking lieux</button>
        </div>
        <button aria-label="Suivant" class="w-5 border-l border-[#c9c9c9] bg-[#e8e8e8] grid place-items-center fill-[#888]"><svg class="size-3.5 -rotate-90"><use href="#down"/></svg></button>
      </div>
      <button class="ml-2 flex items-center"><svg class="size-3.5"><use href="#filt"/></svg>Filter</button>
      <button class="ml-2.5 flex items-center"><svg class="size-3.5 fill-[#333]"><use href="#addp"/></svg>Add Page...</button>
      <button aria-label="Réduire les pages" class="ml-2 mr-2.5 fill-[#444]"><svg class="size-3.5 rotate-180"><use href="#down"/></svg></button>
    </div>
  </main>

  <!-- properties panel -->
  <aside class="w-[291px] shrink-0 border-l border-[#d0d0d0] flex">
    <p class="flex-1 flex items-center justify-center pr-1 text-center text-[13px] leading-[15px] text-[#acacac]"><span>Select objects in the<br>canvas to edit properties.</span></p>
    <div class="w-9 shrink-0 flex flex-col justify-between items-start pt-1 pb-1">
      <button class="w-8 h-[116px] rounded-[2px] bg-[#c6c6c6] flex flex-col items-center justify-center gap-2 fill-[#333]"><span class="[writing-mode:vertical-rl] rotate-180 text-[13px] leading-[16px]">Properties</span><svg class="size-4 -rotate-90"><use href="#tune"/></svg></button>
      <button aria-label="Épingler" class="ml-1 w-[23px] h-[23px] rounded-[2px] bg-[#d8d8d8] grid place-items-center fill-[#7d7d7d]"><svg class="size-3.5"><use href="#pin"/></svg></button>
    </div>
  </aside>
</div>

<!-- desktop task bar -->
<footer class="h-[29px] shrink-0 border-t-2 border-[#262626] bg-linear-to-b from-[#444] to-[#303030] flex items-center text-[#d8d8d8] text-[12px] font-['Noto_Sans',sans-serif]">
  <button class="ml-1 flex items-center gap-1 w-[68px]"><svg class="w-5 h-5" viewBox="0 0 20 20"><path d="M0 0h14a6 6 0 0 1 6 6v14H8a6 6 0 0 1-5-6V5H0z" fill="#e8f5d8"/><path d="M2 1h12a5 5 0 0 1 5 5v13H9a5 5 0 0 1-5-5V4H2z" fill="#8cc152"/><path d="M7 5v7q0 3 3 3h3q3 0 3-3V9q0-2-1.5-2T13 9v3M13 9q0-2-1.5-2T10 9v3" fill="none" stroke="#fff" stroke-width="1.5"/></svg>Menu</button>
  <div class="flex items-center w-[167px]">
    <button aria-label="Bureau" class="w-[22px] mr-3"><svg class="w-[22px] h-[19px]" viewBox="0 0 22 19"><path d="M0 0h22v19H0z" fill="#b84b4b"/><path d="M0 0h22v4H0z" fill="#8f3434"/></svg></button>
    <button aria-label="Firefox" class="w-5 mr-[5px]"><svg class="w-5 h-5" viewBox="0 0 20 20"><rect width="20" height="20" rx="3" fill="#ee7c3a"/><path d="M4 6l3 1 1-2 1 3 2 1-2 2c0 2 5 2 5-1 0-2-1-3-2-4 3 0 5 2 5 5s-3 5-6 5-7-2-7-5z" fill="#fff"/></svg></button>
    <button aria-label="Terminal" class="w-[22px] mr-[5px]"><svg class="w-[22px] h-[21px]" viewBox="0 0 22 21"><rect x=".5" y=".5" width="21" height="20" rx="3" fill="#1c1c1c" stroke="#555"/><text x="3" y="9" font-size="7" fill="#fff">$_</text></svg></button>
    <button aria-label="Fichiers" class="w-[21px] mr-[5px]"><svg class="w-[21px] h-[18px]" viewBox="0 0 21 18"><path d="M0 1h9v4H0z" fill="#fff"/><path d="M0 4h21v13H0z" fill="#b84b4b"/></svg></button>
    <button aria-label="VirtualBox" class="w-5 mr-[5px]"><svg class="w-5 h-5" viewBox="0 0 20 20"><path d="M10 0l9 4v11l-9 5-9-5V4z" fill="#7d9fc9"/><path d="M10 0l9 4-9 4-9-4z" fill="#c7dbf0"/><path d="M10 8l9-4v11l-9 5z" fill="#4f6f9e"/></svg></button>
    <button aria-label="Pencil" class="w-5"><svg class="w-5 h-5" viewBox="0 0 20 20"><rect width="20" height="20" rx="3" fill="#f9940f"/><path d="M5 15V8l3-4h4l3 4v7z" fill="#fff"/></svg></button>
  </div>
  <div class="flex-1 min-w-0 flex gap-[3px] h-full whitespace-nowrap">
    <button class="flex-1 min-w-0 h-full flex items-center gap-[7px] pl-[5px] rounded-t bg-linear-to-r from-[#8ea66c] from-76% to-[#3c3c3c] to-76% text-[#ececec]"><svg class="w-4 h-5 shrink-0"><use href="#ffx"/></svg>open office pdf - Rec...</button>
    <button class="flex-1 min-w-0 h-full flex items-center gap-[7px] pl-[5px] rounded-t bg-linear-to-b from-[#6c6c6c] to-[#4a4a4a]"><svg class="w-4 h-5 shrink-0"><use href="#home"/></svg>jeuteuf - Pencil</button>
    <button class="flex-1 min-w-0 h-full flex items-center gap-[7px] pl-[5px] rounded-t bg-[#3c3c3c]"><svg class="w-4 h-5 shrink-0"><use href="#fold"/></svg>Téléchargements</button>
    <button class="flex-1 min-w-0 h-full flex items-center gap-[7px] pl-[5px] rounded-t bg-[#3c3c3c]"><svg class="w-4 h-5 shrink-0" viewBox="0 0 16 20"><path d="M2 3h6v5H2zM9 12h5v5H9z" fill="#f4e91a"/><path d="M10 4h4v4h-4zM2 13h5v4H2z" fill="#1a9a2c"/><path d="M2 9h6v1H2zM9 10h5v1H9z" fill="#2a64c8"/></svg>JMerise :</button>
    <button class="flex-1 min-w-0 h-full flex items-center gap-[7px] pl-[5px] rounded-t bg-[#3c3c3c]"><svg class="w-4 h-5 shrink-0" viewBox="0 0 16 20"><rect y="1" width="16" height="18" rx="2" fill="#d05b62"/><path d="M2 10l3-4m9 4l-3-4M2 10h5v4H2zM9 10h5v4H9zM7 11h2" fill="none" stroke="#fff"/></svg>DProjet_FADIKA Mo...</button>
    <button class="flex-1 min-w-0 h-full flex items-center gap-[7px] pl-[5px] rounded-t bg-[#3c3c3c]"><svg class="w-4 h-5 shrink-0" viewBox="0 0 16 20"><rect y="1" width="16" height="18" rx="2" fill="#1d7fbf"/><path d="M3 6h10M3 8.5h10M3 11h10M3 13.5h10" stroke="#fff"/></svg>Sans nom 1 - LibreOf...</button>
    <button class="flex-1 min-w-0 h-full flex items-center gap-[7px] pl-[5px] rounded-t bg-[#3c3c3c]"><svg class="w-4 h-5 shrink-0"><use href="#gimp"/></svg>[PageInscription] (im...</button>
    <button class="flex-1 min-w-0 h-full flex items-center gap-[7px] pl-[5px] rounded-t bg-[#3c3c3c]"><svg class="w-4 h-5 shrink-0"><use href="#gimp"/></svg>[ModalConnexion] (i...</button>
    <button class="flex-1 min-w-0 h-full flex items-center gap-[7px] pl-[5px] rounded-t bg-[#3c3c3c]"><svg class="w-4 h-5 shrink-0"><use href="#gimp"/></svg>*[AccueilApresConn...</button>
  </div>
  <div class="w-[227px] shrink-0 flex items-center justify-between pl-1.5 pr-1 fill-[#d0d0d0]">
    <svg class="w-5 h-4 mr-1" viewBox="0 0 20 16"><path d="M0 1h20v13H0z" fill="#3c6b45"/><path d="M1 2h18v5H1z" fill="#6f8f72"/><path d="M7 4h5v3h3l-5 5-6-5h3z" fill="#c9efb4"/></svg>
    <svg class="w-4 h-[18px]" viewBox="0 0 16 18"><path d="M8 0l8 3c0 8-3 13-8 15C3 16 0 11 0 3z" fill="#dfe3e8"/><circle cx="8" cy="8" r="4.5" fill="#3b78b8"/><path d="M7.5 6h1v5h-1z" fill="#fff"/></svg>
    <svg class="w-3.5 h-[18px]" viewBox="0 0 14 18"><ellipse cx="7" cy="9" rx="6" ry="9" fill="#777"/><path d="M4 6l6 6-3 3V3l3 3-6 6" fill="none" stroke="#eee" stroke-width="1.2"/></svg>
    <span class="flex items-center gap-1"><svg class="size-3.5" viewBox="0 0 14 14"><circle cx="7" cy="7" r="6.5"/><path d="M6 3h2v5H6zM6 9h2v2H6z" fill="#333"/></svg>1</span>
    <svg class="w-3 h-3.5" viewBox="0 0 12 14"><circle cx="6" cy="4" r="3.5"/><path d="M0 14c0-5 2-6 6-6s6 1 6 6z"/></svg>
    <svg class="w-3.5 h-3.5" viewBox="0 0 14 14"><path d="M1 5q6-5 12 0M3 8q4-3 8 0" fill="none" stroke="#d0d0d0" stroke-width="1.8"/><circle cx="7" cy="11" r="1.8"/></svg>
    <svg class="w-3 h-4" viewBox="0 0 12 16"><path d="M1 2h8v13H1zM3 0h4v2H3z" fill="none" stroke="#d0d0d0" stroke-width="1.5"/><path d="M3 5h4v1H3zM3 8h4v1H3zM3 11h4v1H3zM8 9h3v4H8z"/></svg>
    <time class="font-bold">20:01</time>
    <svg class="w-3.5 h-3.5" viewBox="0 0 14 14"><path d="M0 5h3l4-4v12L3 9H0z"/><path d="M8 4q2 3 0 6M10 2q4 5 0 10" fill="none" stroke="#d0d0d0" stroke-width="1.3"/></svg>
  </div>
</footer>
</body>
</html>
